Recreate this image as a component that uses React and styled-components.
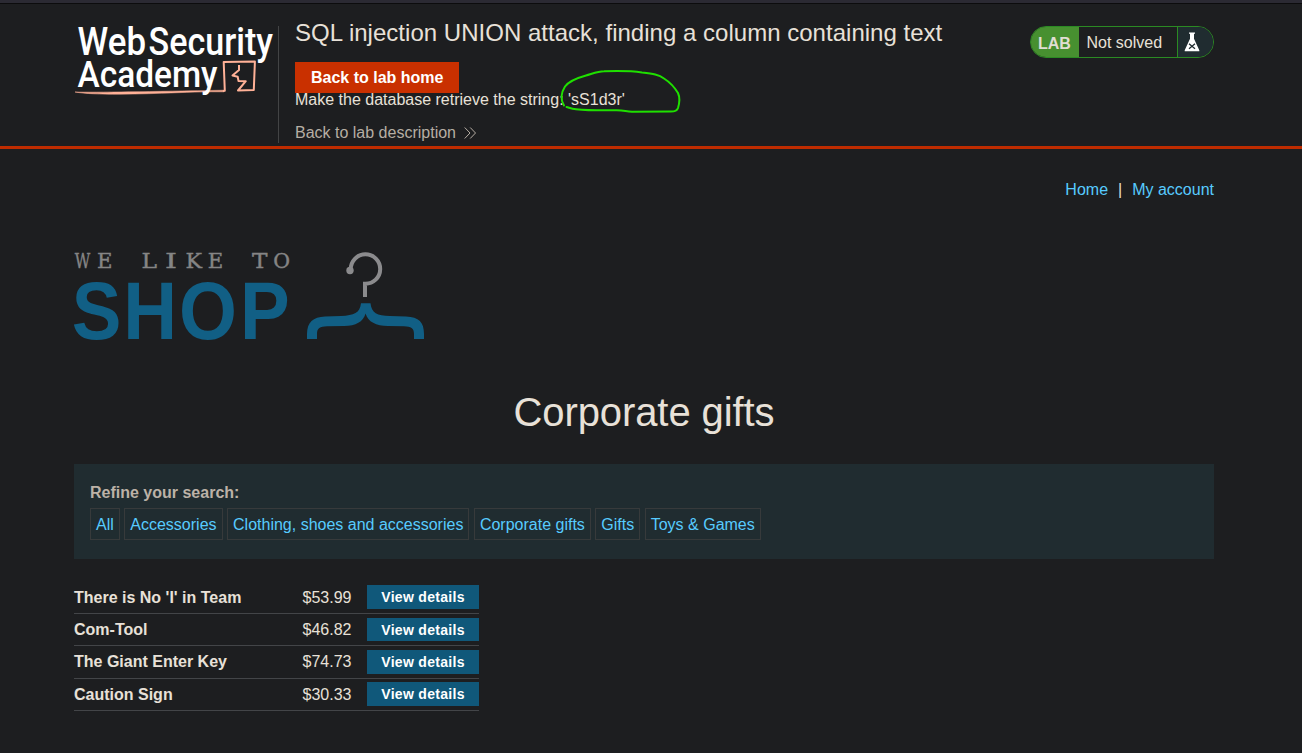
import React from "react";
import styled, { createGlobalStyle } from "styled-components";

const GlobalStyle = createGlobalStyle`
  * { box-sizing: border-box; }
  body {
    margin: 0;
    background: #1d1e20;
    color: #e8e1d8;
    font-family: "Liberation Sans", Arial, sans-serif;
    font-size: 16px;
    line-height: 20px;
  }
`;

const Page = styled.div`
  position: relative;
  height: 753px;
  overflow: hidden;
`;

const TopStrip = styled.div`
  height: 4px;
  background: #2b2a33;
  border-bottom: 1px solid #0c0c0d;
`;

const Header = styled.header`
  height: 145px;
  padding: 22px 0 0 74px;
  border-bottom: 3px solid #bf2c00;
`;

const HeaderInner = styled.div`
  display: flex;
  align-items: flex-start;
  width: 1140px;
`;

const Brand = styled.div`
  width: 205px;
  height: 117px;
  border-right: 1px solid #434445;
`;

const Intro = styled.div`
  flex: 1;
  padding-left: 16px;
  display: flex;
  flex-direction: column;
  align-items: flex-start;
`;

const LabTitle = styled.h2`
  margin: -7px 0 0;
  height: 43px;
  font-size: 24px;
  line-height: 28px;
  font-weight: 400;
  letter-spacing: 0.02px;
  white-space: nowrap;
`;

const HomeButton = styled.a`
  height: 31px;
  padding: 0 16px;
  background: #c93000;
  color: #fff;
  font-weight: 700;
  line-height: 31px;
`;

const Hint = styled.p`
  margin: -3px 0 0;
  height: 33px;
`;

const BackLink = styled.a`
  display: flex;
  align-items: center;
  gap: 8px;
  color: #b6aea4;
`;

const Status = styled.div`
  display: flex;
  width: 184px;
  height: 32px;
  border: 1px solid #2b8a23;
  border-radius: 16px;
  overflow: hidden;
  line-height: 31px;
`;

const StatusTag = styled.span`
  width: 48px;
  padding-left: 7px;
  background: #479030;
  color: #e0ded3;
  font-weight: 700;
  line-height: 33px;
`;

const StatusText = styled.span`
  flex: 1;
  padding-left: 7.5px;
`;

const StatusIcon = styled.span`
  width: 36px;
  padding: 5px 0 0 6px;
  border-left: 1px solid #2b8a23;
  background: #202c30;
  line-height: 0;
`;

const Main = styled.main`
  width: 1214px;
  padding: 31px 0 0 74px;
`;

const Nav = styled.nav`
  display: flex;
  justify-content: flex-end;
  gap: 10px;
  height: 68px;
`;

const NavLink = styled.a`
  color: #57cbff;
`;

const ShopLogo = styled.div`
  height: 139px;
`;

const Heading = styled.h1`
  margin: 0;
  height: 77px;
  font-size: 40px;
  line-height: 50px;
  font-weight: 400;
  letter-spacing: -0.1px;
  text-align: center;
`;

const FilterPanel = styled.section`
  height: 95px;
  padding: 19px 16px;
  background: #202c30;
`;

const FilterTitle = styled.div`
  height: 25px;
  color: #bcb2a7;
  font-weight: 700;
`;

const FilterList = styled.div`
  display: flex;
  gap: 4.5px;
`;

const FilterTag = styled.a`
  height: 32px;
  padding: 0 5px;
  border: 1px solid #373a3b;
  color: #57cbff;
  line-height: 31px;
`;

const Products = styled.div`
  width: 405px;
  padding-top: 22.6px;
`;

const ProductRow = styled.div`
  display: grid;
  grid-template-columns: 228.5px 64.5px 112px;
  align-items: center;
  height: 32.33px;
  border-bottom: 1px solid #434548;
`;

const ProductName = styled.span`
  padding-top: 0.6px;
  font-weight: 700;
`;

const Price = styled.span`
  padding-top: 0.9px;
`;

const DetailsButton = styled.a`
  height: 23.67px;
  background: #10587a;
  color: #fff;
  font-size: 14px;
  font-weight: 700;
  letter-spacing: 0.3px;
  line-height: 24px;
  text-align: center;
`;

const Marker = styled.svg`
  position: absolute;
  left: 557px;
  top: 67px;
  pointer-events: none;
`;

const AcademyLogo = () => (
  <svg width="204" height="76" viewBox="74 26 204 76" fill="none" overflow="visible">
    <g fill="#fff" fontFamily="Roboto, sans-serif" fontSize="38" fontWeight="500">
      <text x="77.5" y="54.5" textLength="68.5" lengthAdjust="spacingAndGlyphs">Web</text>
      <text x="148.5" y="54.5" textLength="124.5" lengthAdjust="spacingAndGlyphs">Security</text>
    </g>
    <path d="M75 92C95 92.6 150 91.5 224 90.2V91.8C190 91.5 160 94 120 94.2C100 94.3 85 93.8 75 92Z" fill="#ffb197" stroke="#ffb197" strokeWidth="0.5" />
    <path
      d="M223 91L224.8 90.8 223.7 62 254.9 61.5 253.8 90 238 90.5 245.8 81.2 238.5 81 237.7 76.7 232.5 75.5 239 70V65"
      stroke="#ffb197"
      strokeWidth="2"
      strokeLinejoin="round"
    />
    <text x="77.5" y="87" fill="#fff" fontFamily="Roboto, sans-serif" fontSize="37.5" fontWeight="500" textLength="140" lengthAdjust="spacingAndGlyphs">Academy</text>
  </svg>
);

const FlaskIcon = () => (
  <svg width="16" height="20" viewBox="0 0 16 20">
    <path d="M5 .5h6v1.2H10v5L15.3 18.3V19.3H.7V18.3L6 6.7v-5H5z" fill="#fff" />
    <path d="M5 11.8l6 5M11 11.8l-6 5" stroke="#202c30" strokeWidth="1.3" />
  </svg>
);

const TAGLINE = [
  ["W", 74.7, 15.5], ["E", 97, 15.5], ["L", 141.5, 15.5], ["I", 165, 12],
  ["K", 185.5, 16.5], ["E", 207.7, 15.5], ["T", 252, 15.5], ["O", 273.3, 16.8],
];
const SHOP = [["S", 71.8], ["H", 123.3], ["O", 178.9], ["P", 240]];

const WeLikeToShop = () => (
  <svg width="360" height="96" viewBox="74 248 360 96" fill="none" overflow="visible">
    <g fill="#858585" stroke="#858585" strokeWidth="0.4" fontFamily="'DejaVu Serif', serif" fontSize="20.5">
      {TAGLINE.map(([c, x, w]) => (
        <text key={x} x={x} y="268" textLength={w} lengthAdjust="spacingAndGlyphs">{c}</text>
      ))}
    </g>
    <g fill="#115f85" fontSize="81" fontWeight="700">
      {SHOP.map(([c, x]) => (
        <text key={c} transform={`translate(${x} 339) scale(.92 1)`}>{c}</text>
      ))}
    </g>
    <circle cx="350" cy="270.5" r="3.7" fill="#8b8b8d" />
    <path d="M350.8 269.5A14.7 14.7 0 1 1 365 283.7V297" stroke="#8b8b8d" strokeWidth="4" />
    <path
      d="M307 339V334C307 322 313 317 325 316.4L341 316C354 315.5 360 313 361 303.3H370.5C371.5 313 377 315.8 390 316L406 316.4C419 317 424 322 424 334V339H414V334C414 328 411 326.5 404 326.3L388 326C376 325.8 368 322 365.6 313.5C363 322 356 325.8 344 326L327 326.3C320 326.5 317 328 317 334V339Z"
      fill="#115f85"
    />
  </svg>
);

const filters = ["All", "Accessories", "Clothing, shoes and accessories", "Corporate gifts", "Gifts", "Toys & Games"];
const products = [
  ["There is No 'I' in Team", "$53.99"],
  ["Com-Tool", "$46.82"],
  ["The Giant Enter Key", "$74.73"],
  ["Caution Sign", "$30.33"],
];

export default function App() {
  return (
    <Page>
      <GlobalStyle />
      <TopStrip />
      <Header>
        <HeaderInner>
          <Brand><AcademyLogo /></Brand>
          <Intro>
            <LabTitle>SQL injection UNION attack, finding a column containing text</LabTitle>
            <HomeButton>Back to lab home</HomeButton>
            <Hint>Make the database retrieve the string: 'sS1d3r'</Hint>
            <BackLink>
              Back to lab description
              <svg width="13" height="12" viewBox="0 0 13 12" fill="none" stroke="#b6aea4">
                <path d="M.7.5L6 6 .7 11.5M6.2.5L11.5 6 6.2 11.5" />
              </svg>
            </BackLink>
          </Intro>
          <Status>
            <StatusTag>LAB</StatusTag>
            <StatusText>Not solved</StatusText>
            <StatusIcon><FlaskIcon /></StatusIcon>
          </Status>
        </HeaderInner>
      </Header>
      <Main>
        <Nav>
          <NavLink>Home</NavLink>
          <span>|</span>
          <NavLink>My account</NavLink>
        </Nav>
        <ShopLogo><WeLikeToShop /></ShopLogo>
        <Heading>Corporate gifts</Heading>
        <FilterPanel>
          <FilterTitle>Refine your search:</FilterTitle>
          <FilterList>
            {filters.map((f) => <FilterTag key={f}>{f}</FilterTag>)}
          </FilterList>
        </FilterPanel>
        <Products>
          {products.map(([name, price]) => (
            <ProductRow key={name}>
              <ProductName>{name}</ProductName>
              <Price>{price}</Price>
              <DetailsButton>View details</DetailsButton>
            </ProductRow>
          ))}
        </Products>
      </Main>
      <Marker width="126" height="49" viewBox="557 67 126 49" fill="none">
        <path
          d="M564 105.5C560 99 561.5 92 565 86.5C569 81 577 78 586 75.5C593 73.5 598 71.3 604 71.3C620 70.8 632 71 642 72.5C653 73.7 659 74.5 664 78.5C671 83 675 88 678 93C679.8 97 679.5 103 678 108C677 111 675 111.8 670 111.6L632 111.8C625 111.5 624 110 615 110.3C600 110.5 585 110.2 576 109.2C571 108.8 569 107.5 566.5 107"
          stroke="#1fe000"
          strokeWidth="2"
          strokeLinecap="round"
        />
      </Marker>
    </Page>
  );
}
